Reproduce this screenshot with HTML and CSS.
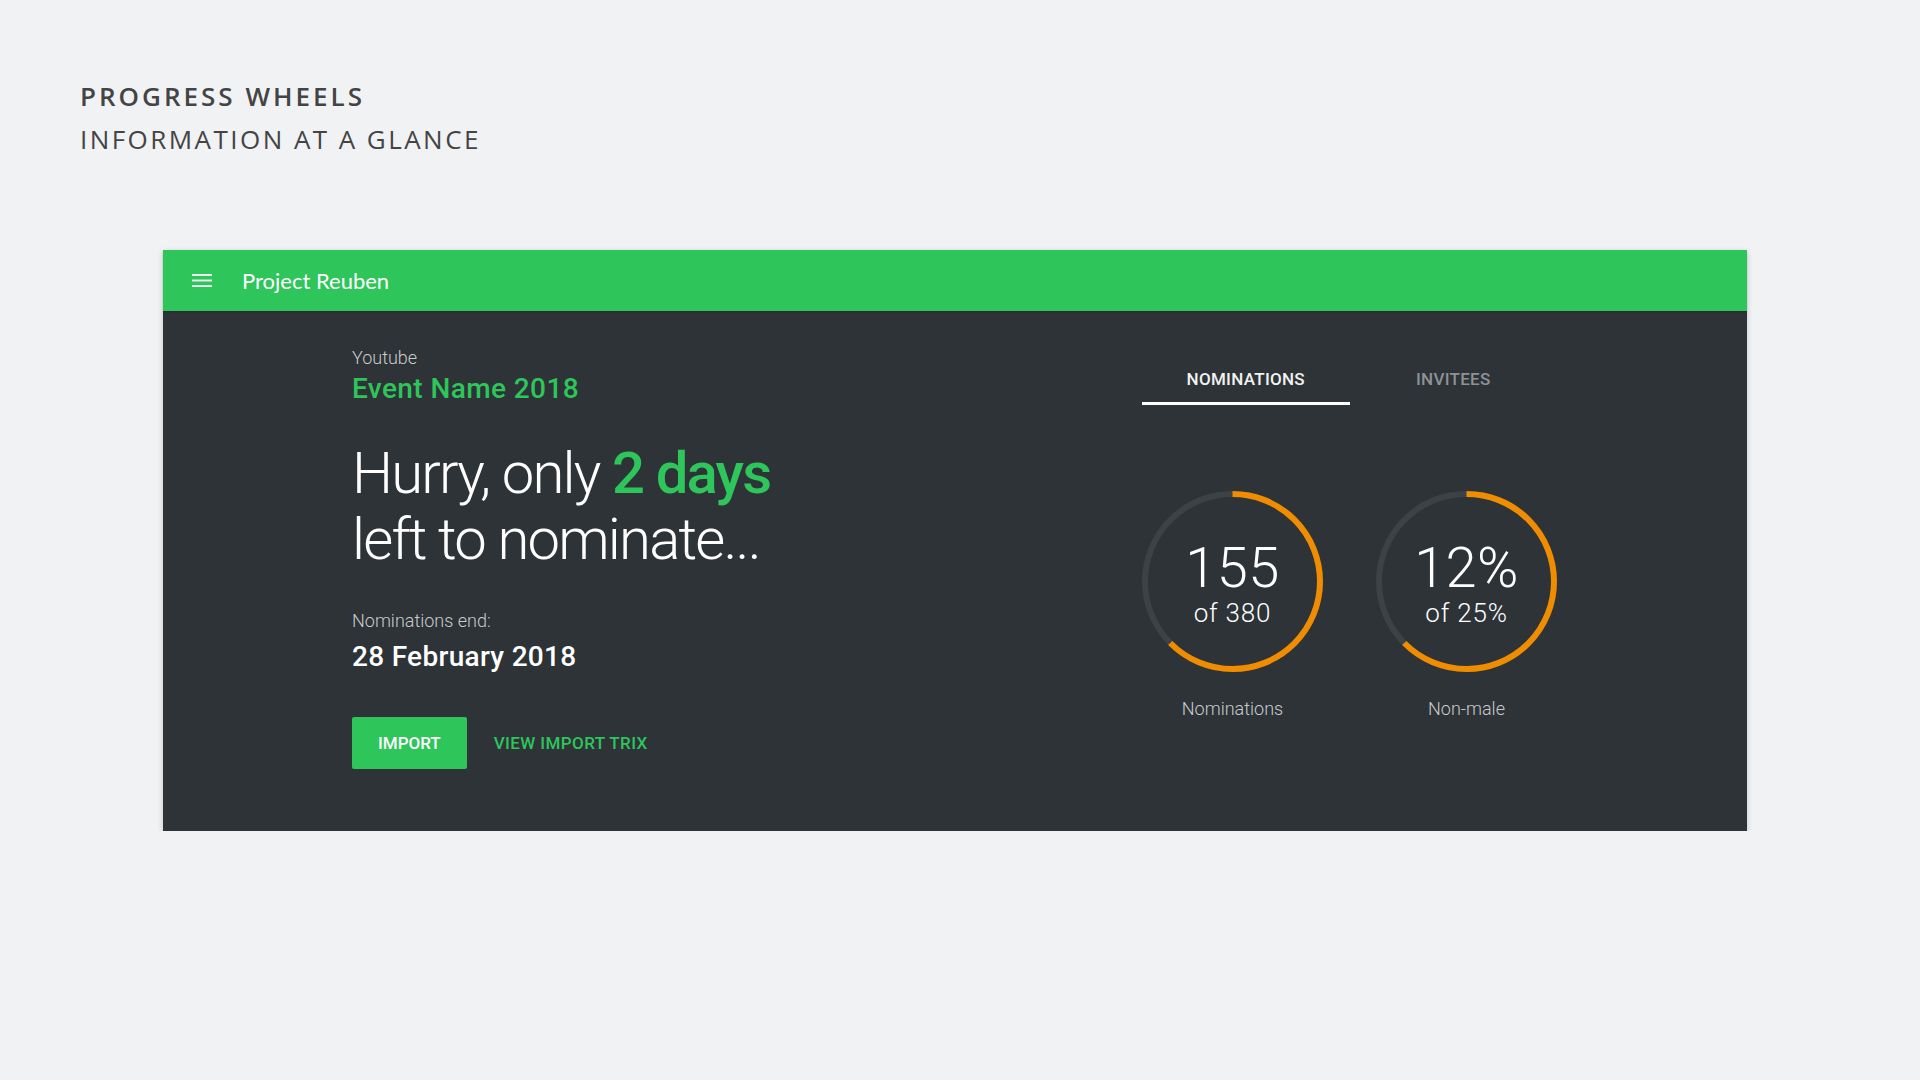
FILE: index.html
```html
<!DOCTYPE html>
<html lang="en">
<head>
    <meta charset="UTF-8">
    <meta name="viewport" content="width=device-width, initial-scale=1.0">
    <title>Progress Wheels</title>
    <link rel="stylesheet" href="styles.css">
</head>
<body>
    <div class="intro">
        <h1>PROGRESS WHEELS</h1>
        <h2>INFORMATION AT A GLANCE</h2>
    </div>

    <div class="card">
        <div class="appbar">
            <svg class="menu-icon" width="20" height="13" viewBox="0 0 20 13">
                <rect x="0" y="0" width="20" height="1.8" fill="#fff"/>
                <rect x="0" y="5.6" width="20" height="1.8" fill="#fff"/>
                <rect x="0" y="11.2" width="20" height="1.8" fill="#fff"/>
            </svg>
            <span class="appbar-title">Project Reuben</span>
        </div>

        <div class="card-body">
            <div class="event">
                <div class="event-source">Youtube</div>
                <div class="event-name">Event Name 2018</div>
                <div class="headline">Hurry, only <strong>2 days</strong><br>left to nominate...</div>
                <div class="end-label">Nominations end:</div>
                <div class="end-date">28 February 2018</div>
                <div class="actions">
                    <button class="btn-import">IMPORT</button>
                    <a class="btn-link" href="#">VIEW IMPORT TRIX</a>
                </div>
            </div>

            <div class="stats">
                <div class="tabs">
                    <div class="tab active">NOMINATIONS</div>
                    <div class="tab">INVITEES</div>
                </div>

                <div class="wheels">
                    <div class="wheel">
                        <div class="wheel-ring">
                            <svg width="181" height="181" viewBox="0 0 181 181">
                                <circle cx="90.5" cy="90.5" r="87.5" class="track"/>
                                <circle cx="90.5" cy="90.5" r="87.5" class="progress" style="stroke-dasharray: 343.6 549.8"/>
                            </svg>
                            <div class="wheel-text">
                                <div class="wheel-value">155</div>
                                <div class="wheel-of">of 380</div>
                            </div>
                        </div>
                        <div class="wheel-label">Nominations</div>
                    </div>
                    <div class="wheel">
                        <div class="wheel-ring">
                            <svg width="181" height="181" viewBox="0 0 181 181">
                                <circle cx="90.5" cy="90.5" r="87.5" class="track"/>
                                <circle cx="90.5" cy="90.5" r="87.5" class="progress" style="stroke-dasharray: 343.6 549.8"/>
                            </svg>
                            <div class="wheel-text">
                                <div class="wheel-value">12%</div>
                                <div class="wheel-of">of 25%</div>
                            </div>
                        </div>
                        <div class="wheel-label">Non-male</div>
                    </div>
                </div>
            </div>
        </div>
    </div>
</body>
</html>
```

FILE: styles.css
```css
body {
    margin: 0;
    background-color: #f1f2f4;
    font-family: Roboto, "Liberation Sans", sans-serif;
}
.intro {
    padding: 80px 0 0 80px;
    color: #444444;
    font-family: "Open Sans", "DejaVu Sans", sans-serif;
}
.intro h1 {
    margin: 0;
    font-size: 26px;
    line-height: 32px;
    font-weight: 600;
    letter-spacing: 3px;
}
.intro h2 {
    margin: 11px 0 0;
    font-size: 26px;
    line-height: 32px;
    font-weight: 400;
    letter-spacing: 2.45px;
}
.card {
    width: 1584px;
    margin: 95px 0 0 163px;
    background-color: #2d3337;
    box-shadow: 0 2px 6px rgba(0, 0, 0, 0.18);
}
.appbar {
    height: 61px;
    display: flex;
    align-items: center;
    padding-left: 29px;
    background-color: #2ec55b;
    box-shadow: 0 1px 2px rgba(0, 0, 0, 0.15);
    box-sizing: border-box;
}
.menu-icon {
    display: block;
}
.appbar-title {
    margin-left: 30px;
    color: #ffffff;
    font-family: Lato, "Open Sans", sans-serif;
    font-size: 22px;
}
.card-body {
    display: flex;
    justify-content: space-between;
    padding: 36px 190px 62px 189px;
}
.event-source {
    font-size: 18px;
    line-height: 22px;
    font-weight: 300;
    color: #c9cbcc;
}
.event-name {
    margin-top: 3px;
    font-size: 28px;
    line-height: 34px;
    font-weight: 500;
    letter-spacing: 0.4px;
    color: #2ec55b;
}
.headline {
    margin-top: 34px;
    font-size: 58px;
    line-height: 66px;
    font-weight: 300;
    letter-spacing: -1.8px;
    color: #ffffff;
}
.headline strong {
    font-weight: 500;
    color: #2ec55b;
}
.end-label {
    margin-top: 38px;
    font-size: 18px;
    line-height: 22px;
    font-weight: 300;
    color: #c9cbcc;
}
.end-date {
    margin-top: 8px;
    font-size: 28px;
    line-height: 34px;
    font-weight: 500;
    letter-spacing: 0.3px;
    color: #ffffff;
}
.actions {
    margin-top: 43px;
    display: flex;
    align-items: center;
}
.btn-import {
    height: 52px;
    padding: 0 26px;
    border: none;
    border-radius: 2px;
    background-color: #2ec55b;
    color: #ffffff;
    font-family: Roboto, sans-serif;
    font-size: 17px;
    font-weight: 500;
    cursor: pointer;
}
.btn-link {
    margin-left: 27px;
    color: #2ec55b;
    font-size: 17px;
    font-weight: 500;
    letter-spacing: 0.4px;
    text-decoration: none;
}
.stats {
    width: 415px;
}
.tabs {
    display: flex;
}
.tab {
    flex: 1;
    padding: 22px 0 13px;
    text-align: center;
    font-size: 17px;
    line-height: 20px;
    font-weight: 500;
    letter-spacing: 0.3px;
    color: #8e9295;
    border-bottom: 3px solid transparent;
}
.tab.active {
    color: #f2f2f2;
    border-bottom-color: #ffffff;
}
.wheels {
    margin-top: 86px;
    display: flex;
    gap: 53px;
}
.wheel {
    width: 181px;
    display: flex;
    flex-direction: column;
    align-items: center;
}
.wheel-ring {
    display: grid;
    place-items: center;
}
.wheel-ring svg,
.wheel-text {
    grid-area: 1 / 1;
}
.wheel-ring svg {
    display: block;
}
.track {
    fill: none;
    stroke: #3c4347;
    stroke-width: 6;
}
.progress {
    fill: none;
    stroke: #f08c00;
    stroke-width: 6;
    transform: rotate(-90deg);
    transform-origin: 90.5px 90.5px;
}
.wheel-text {
    text-align: center;
    color: #ffffff;
    font-weight: 300;
    padding-top: 4px;
}
.wheel-value {
    font-size: 56px;
    line-height: 56px;
    letter-spacing: 0.4px;
}
.wheel-of {
    margin-top: 2px;
    font-size: 26px;
    line-height: 30px;
    letter-spacing: 0.8px;
}
.wheel-label {
    margin-top: 26px;
    font-size: 18px;
    line-height: 22px;
    font-weight: 300;
    color: #c9cbcc;
}
```
